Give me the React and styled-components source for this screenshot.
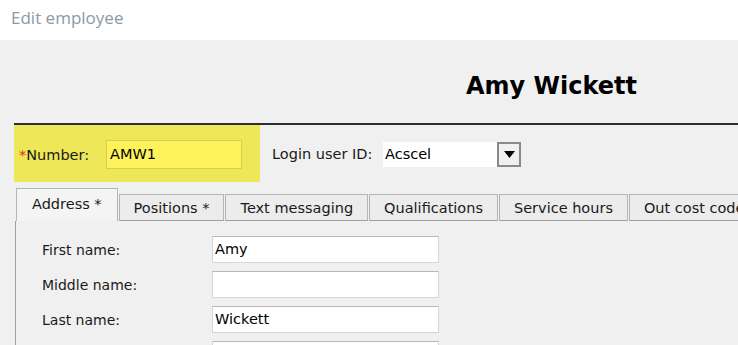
import React from "react";
import styled, { createGlobalStyle } from "styled-components";

const GlobalStyle = createGlobalStyle`
  html, body {
    margin: 0;
    padding: 0;
    background: #f0f0f0;
    overflow: hidden;
  }
  body {
    font-family: "DejaVu Sans", Verdana, sans-serif;
  }
`;

const tabs = [
  { label: "Address *", active: true },
  { label: "Positions *" },
  { label: "Text messaging" },
  { label: "Qualifications" },
  { label: "Service hours" },
  { label: "Out cost code" },
];

const fields = [
  { label: "First name:", value: "Amy" },
  { label: "Middle name:", value: "" },
  { label: "Last name:", value: "Wickett" },
  { label: "", value: "" },
];

const App = () => {
  return (
    <Page>
      <GlobalStyle />
      <Header>Edit employee</Header>
      <Main>
        <TitleRow>
          <Name>Amy Wickett</Name>
        </TitleRow>

        <IdRow>
          <Highlight>
            <FieldLabel>
              <Req>*</Req>Number:
            </FieldLabel>
            <NumberInput>AMW1</NumberInput>
          </Highlight>
          <LoginLabel>Login user ID:</LoginLabel>
          <Select>
            <SelectText>Acscel</SelectText>
            <SelectButton>
              <svg width="11" height="7" viewBox="0 0 11 7">
                <path d="M0 0h11L5.5 7z" fill="#000" />
              </svg>
            </SelectButton>
          </Select>
        </IdRow>

        <TabStrip>
          {tabs.map((t) => (
            <Tab key={t.label} $active={t.active}>
              {t.label}
            </Tab>
          ))}
          <TabFill />
        </TabStrip>

        <Panel>
          {fields.map((f, i) => (
            <FormRow key={i}>
              <RowLabel>{f.label}</RowLabel>
              <TextBox>{f.value}</TextBox>
            </FormRow>
          ))}
        </Panel>
      </Main>
    </Page>
  );
};

const Page = styled.div`
  width: 738px;
  height: 345px;
  overflow: hidden;
`;

const Header = styled.div`
  height: 40px;
  background: #ffffff;
  padding-left: 11px;
  box-sizing: border-box;
  font-family: "Open Sans", "Noto Sans", sans-serif;
  font-size: 17px;
  line-height: 36px;
  color: #8c99a6;
`;

const Main = styled.div`
  background: #f0f0f0;
  padding-left: 14px;
`;

const TitleRow = styled.div`
  height: 85px;
  border-bottom: 2px solid #2e2e2e;
  display: flex;
  align-items: center;
  padding-left: 452px;
  padding-top: 9px;
  box-sizing: border-box;
`;

const Name = styled.div`
  font-family: "DejaVu Sans", Verdana, sans-serif;
  font-weight: bold;
  font-size: 24px;
  color: #000;
`;

const IdRow = styled.div`
  display: flex;
  align-items: center;
  height: 57px;
`;

const Highlight = styled.div`
  width: 246px;
  height: 57px;
  background: #eee859;
  display: flex;
  align-items: center;
  padding-left: 5px;
  padding-top: 2px;
  box-sizing: border-box;
`;

const FieldLabel = styled.div`
  width: 87px;
  font-size: 14.5px;
  color: #1a1a1a;
`;

const Req = styled.span`
  color: #e0301e;
`;

const NumberInput = styled.div`
  width: 136px;
  height: 29px;
  box-sizing: border-box;
  background: #fff35c;
  border: 1px solid #d8cf4a;
  font-size: 14.5px;
  line-height: 27px;
  padding-left: 3px;
  color: #000;
`;

const LoginLabel = styled.div`
  margin-left: 12px;
  width: 111px;
  font-size: 14.5px;
  color: #1a1a1a;
`;

const Select = styled.div`
  width: 138px;
  height: 25px;
  display: flex;
  background: #fff;
  box-sizing: border-box;
  margin-top: 2px;
`;

const SelectText = styled.div`
  flex: 1;
  font-size: 14.5px;
  line-height: 25px;
  padding-left: 2px;
  color: #000;
`;

const SelectButton = styled.div`
  width: 24px;
  height: 25px;
  box-sizing: border-box;
  border: 2px solid #8a8a8a;
  background: #f0f0f0;
  display: flex;
  align-items: center;
  justify-content: center;
`;

const TabStrip = styled.div`
  display: flex;
  align-items: flex-end;
  margin-top: 6px;
  height: 33px;
  padding-left: 2px;
`;

const Tab = styled.div`
  height: ${(p) => (p.$active ? "33px" : "27px")};
  box-sizing: border-box;
  padding: 0 ${(p) => (p.$active ? "15px" : "14px")};
  font-size: 14.5px;
  line-height: ${(p) => (p.$active ? "30px" : "26px")};
  color: #1a1a1a;
  white-space: nowrap;
  background: ${(p) => (p.$active ? "#f4f4f4" : "#ececec")};
  border: 1px solid #b5b5b5;
  border-bottom: ${(p) => (p.$active ? "none" : "1px solid #a0a0a0")};
  margin-left: ${(p) => (p.$active ? "0" : "1px")};
`;

const TabFill = styled.div`
  flex: 1;
  border-bottom: 1px solid #a0a0a0;
`;

const Panel = styled.div`
  border-left: 1px solid #a0a0a0;
  margin-left: 1px;
  padding: 15px 0 0 26px;
  height: 200px;
`;

const FormRow = styled.div`
  display: flex;
  align-items: center;
  height: 27px;
  margin-bottom: 8px;
`;

const RowLabel = styled.div`
  width: 170px;
  font-size: 14px;
  color: #1a1a1a;
`;

const TextBox = styled.div`
  width: 227px;
  height: 27px;
  box-sizing: border-box;
  background: #fff;
  border: 1px solid #d6d6d6;
  border-top-color: #b8b8b8;
  font-size: 14.5px;
  line-height: 25px;
  padding-left: 2px;
  color: #000;
`;

export default App;
